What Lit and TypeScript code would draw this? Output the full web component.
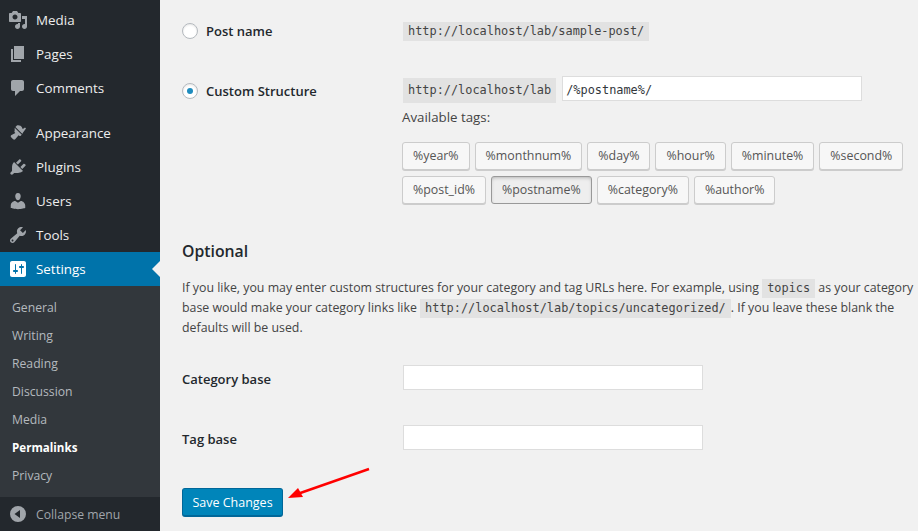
import { LitElement, html, css, svg } from "lit";
import { customElement } from "lit/decorators.js";

const ICONS: Record<string, string> = {
  media: "M13 11V4c0-.55-.45-1-1-1h-1.67L9 1H5L3.67 3H2c-.55 0-1 .45-1 1v7c0 .55.45 1 1 1h10c.55 0 1-.45 1-1zM7 4.5c1.38 0 2.5 1.12 2.5 2.5S8.38 9.5 7 9.5 4.5 8.38 4.5 7 5.62 4.5 7 4.5zM14 6h5v10.5c0 1.38-1.12 2.5-2.5 2.5S14 17.88 14 16.5s1.12-2.5 2.5-2.5c.17 0 .34.02.5.05V9h-3V6zm-4 8.05V13h2v3.5c0 1.38-1.12 2.5-2.5 2.5S7 17.88 7 16.5 8.12 14 9.5 14c.17 0 .34.02.5.05z",
  pages: "M6 15V2h10v13H6zm-1 1h8v2H3V5h2v11z",
  comments: "M5 2h9c1.1 0 2 .9 2 2v7c0 1.1-.9 2-2 2h-2l-5 5v-5H5c-1.1 0-2-.9-2-2V4c0-1.1.9-2 2-2z",
  appearance: "M14.48 11.06L7.41 3.99l1.5-1.5c.5-.56 2.3-.47 3.59.32 1.18.73 1.63 1.97 1.8 2.68.14.56.97.43 2.7-.99l1 1-4.02 5.56zM6.7 4.7l7.07 7.07-1.06 1.06c-.39.39-1.03.39-1.42 0l-.68-.68-3.42 4.21c-.56.56-1.47.56-2.03 0l-2.03-2.03c-.56-.56-.56-1.47 0-2.03L7.34 9.88l-.68-.68c-.39-.39-.39-1.03 0-1.42z",
  plugins: "M13.11 4.36L9.87 7.6 8 5.73l3.24-3.24c.35-.34 1.05-.2 1.56.32.52.51.66 1.21.31 1.55zm-8 1.77l.91-1.12 9.01 9.01-1.19.84c-.71.71-2.63 1.16-3.82 1.16H6.14L4.9 17.26c-.59.59-1.54.59-2.12 0-.59-.58-.59-1.53 0-2.12l1.24-1.24v-3.88c0-1.13.4-3.19 1.09-3.89zm7.26 3.97l3.24-3.24c.34-.35 1.04-.21 1.55.31.52.51.66 1.21.31 1.55l-3.24 3.25z",
  users: "M10 9.25c-2.27 0-2.73-3.44-2.73-3.44C7 4.02 7.82 2 9.97 2c2.16 0 2.98 2.02 2.71 3.81 0 0-.41 3.44-2.68 3.44zm0 2.57L12.72 10c2.39 0 4.52 2.33 4.52 4.53v2.49s-3.65 1.13-7.24 1.13c-3.65 0-7.24-1.13-7.24-1.13v-2.49c0-2.25 1.94-4.48 4.47-4.48z",
  tools: "M16.68 9.77c-1.34 1.34-3.3 1.67-4.95.99l-5.41 6.52c-.99.99-2.59.99-3.58 0s-.99-2.59 0-3.57l6.52-5.42c-.68-1.65-.35-3.61.99-4.95 1.28-1.28 3.12-1.62 4.72-1.06l-2.89 2.89 2.82 2.82 2.86-2.87c.53 1.58.18 3.39-1.08 4.65zM3.81 16.21c.4.39 1.04.39 1.43 0 .4-.4.4-1.04 0-1.43-.39-.4-1.03-.4-1.43 0-.39.39-.39 1.03 0 1.43z",
  settings: "M18 16V4c0-1.1-.9-2-2-2H4c-1.1 0-2 .9-2 2v12c0 1.1.9 2 2 2h12c1.1 0 2-.9 2-2zM8 11h1c.55 0 1 .45 1 1s-.45 1-1 1H8v1.5c0 .28-.22.5-.5.5s-.5-.22-.5-.5V13H6c-.55 0-1-.45-1-1s.45-1 1-1h1V5.5c0-.28.22-.5.5-.5s.5.22.5.5V11zm5-2h-1c-.55 0-1-.45-1-1s.45-1 1-1h1V5.5c0-.28.22-.5.5-.5s.5.22.5.5V7h1c.55 0 1 .45 1 1s-.45 1-1 1h-1v5.5c0 .28-.22.5-.5.5s-.5-.22-.5-.5V9z",
  collapse: "M10 2a8 8 0 1 0 0 16 8 8 0 0 0 0-16zm2 4v8L6.5 10z",
};

const icon = (name: string) => html`<svg class="ic" viewBox="0 0 20 20" width="20" height="20">${svg`<path fill-rule="evenodd" d=${ICONS[name]}></path>`}</svg>`;

const GROUP1 = [["media", "Media"], ["pages", "Pages"], ["comments", "Comments"]];
const GROUP2 = [["appearance", "Appearance"], ["plugins", "Plugins"], ["users", "Users"], ["tools", "Tools"]];
const SUB = ["General", "Writing", "Reading", "Discussion", "Media", "Permalinks", "Privacy"];
const TAGS = [
  ["%year%", "%monthnum%", "%day%", "%hour%", "%minute%", "%second%"],
  ["%post_id%", "%postname%", "%category%", "%author%"],
];

@customElement("app-root")
export class AppRoot extends LitElement {
  static styles = css`
    :host {
      display: flex;
      position: relative;
      width: 918px;
      height: 531px;
      overflow: hidden;
      background: #f1f1f1;
      color: #23282d;
      font-family: "Open Sans", sans-serif;
      font-size: 12.35px;
    }
    .side {
      width: 160px;
      flex: none;
      background: #23282d;
      display: flex;
      flex-direction: column;
      padding-top: 3px;
      box-sizing: border-box;
    }
    .item {
      height: 34px;
      display: flex;
      align-items: center;
      gap: 8px;
      padding-left: 8px;
      color: #eee;
      font-size: 13.4px;
    }
    .ic { fill: #a0a5aa; flex: none; }
    .sep { height: 11px; }
    .item.cur { background: #0073aa; color: #fff; position: relative; }
    .item.cur .ic { fill: #fff; }
    .item.cur::after {
      content: "";
      position: absolute;
      right: 0;
      top: 9px;
      border: 8px solid transparent;
      border-right-color: #f1f1f1;
      border-left-width: 0;
    }
    .sub {
      background: #32373c;
      padding: 8px 0 6px;
      flex: 1;
    }
    .sub div {
      height: 28px;
      line-height: 28px;
      padding-left: 12px;
      color: #b4b9be;
      font-size: 12.2px;
    }
    .sub div.on { color: #fff; font-weight: 700; font-size: 11.6px; }
    .collapse { color: #a0a5aa; font-size: 12.2px; height: 34px; flex: none; }
    .main {
      flex: 1;
      min-width: 0;
      padding: 21px 0 0 22px;
      line-height: 20px;
      color: #444;
    }
    .row { display: grid; grid-template-columns: 221px 1fr; }
    .lbl { display: flex; align-items: center; gap: 8px; font-weight: 600; color: #23282d; font-size: 13px; height: 20px; }
    .radio {
      width: 16px;
      height: 16px;
      box-sizing: border-box;
      border: 1px solid #b4b9be;
      border-radius: 50%;
      background: #fff;
      box-shadow: inset 0 1px 2px rgba(0,0,0,.1);
      display: flex;
      align-items: center;
      justify-content: center;
    }
    .radio.on::before { content: ""; width: 6px; height: 6px; border-radius: 50%; background: #1e8cbe; }
    code {
      font-family: "DejaVu Sans Mono", monospace;
      font-size: 11.9px;
      background: #e2e2e2;
      padding: 2px 5px 3px;
      color: #444;
    }
    .custom { margin-top: 40px; }
    .cs { display: flex; align-items: center; gap: 6px; margin-top: -5px; height: 25px; }
    .cs code { margin-top: 4px; }
    .inp {
      box-sizing: border-box;
      background: #fff;
      border: 1px solid #ddd;
      height: 25px;
    }
    .cs .inp {
      width: 300px;
      font-family: "DejaVu Sans Mono", monospace;
      font-size: 11.9px;
      color: #32373c;
      padding-left: 3px;
      line-height: 27px;
    }
    .avail { margin: 6px 0 0 -1px; font-size: 13.3px; }
    .tags { display: flex; gap: 5px; margin: 15px 0 0 -1px; }
    .tags + .tags { margin-top: 6px; }
    .tag {
      box-sizing: border-box;
      height: 28px;
      line-height: 26px;
      padding: 0 10px;
      border: 1px solid #ccc;
      border-radius: 3px;
      background: #f7f7f7;
      box-shadow: 0 1px 0 #ccc;
      color: #555;
      font-size: 12.4px;
    }
    .tag.on { background: #eee; border-color: #999; box-shadow: inset 0 2px 5px -3px rgba(0,0,0,.5); }
    h2 { margin: 37px 0 0; font-size: 15.8px; font-weight: 600; line-height: 20px; color: #23282d; }
    .desc { margin: 17px 0 0; white-space: nowrap; }
    .base { align-items: center; height: 25px; }
    .base .lbl { height: 25px; padding-top: 2px; box-sizing: border-box; }
    .base .inp { width: 300px; }
    .b1 { margin-top: 27px; }
    .b2 { margin-top: 35px; }
    .save {
      display: inline-block;
      margin-top: 38px;
      width: 101px;
      height: 29px;
      box-sizing: border-box;
      line-height: 27px;
      text-align: center;
      background: #0085ba;
      border: 1px solid #006799;
      border-bottom-width: 2px;
      border-radius: 3px;
      color: #fff;
      font-size: 12.5px;
    }
    .arrow { position: absolute; left: 280px; top: 460px; }
  `;

  render() {
    return html`
      <nav class="side">
        ${GROUP1.map(([i, t]) => html`<div class="item">${icon(i)}<span>${t}</span></div>`)}
        <div class="sep"></div>
        ${GROUP2.map(([i, t]) => html`<div class="item">${icon(i)}<span>${t}</span></div>`)}
        <div class="item cur">${icon("settings")}<span>Settings</span></div>
        <div class="sub">
          ${SUB.map((s) => html`<div class=${s === "Permalinks" ? "on" : ""}>${s}</div>`)}
        </div>
        <div class="item collapse">${icon("collapse")}<span>Collapse menu</span></div>
      </nav>
      <main class="main">
        <div class="row">
          <div class="lbl"><span class="radio"></span>Post name</div>
          <div><code>http://localhost/lab/sample-post/</code></div>
        </div>
        <div class="row custom">
          <div class="lbl"><span class="radio on"></span>Custom Structure</div>
          <div>
            <div class="cs"><code>http://localhost/lab</code><div class="inp">/%postname%/</div></div>
            <div class="avail">Available tags:</div>
            ${TAGS.map((r) => html`<div class="tags">${r.map((t) => html`<span class="tag ${t === "%postname%" ? "on" : ""}">${t}</span>`)}</div>`)}
          </div>
        </div>
        <h2>Optional</h2>
        <p class="desc">If you like, you may enter custom structures for your category and tag URLs here. For example, using <code>topics</code> as your category<br />base would make your category links like <code>http://localhost/lab/topics/uncategorized/</code>. If you leave these blank the<br />defaults will be used.</p>
        <div class="row base b1"><div class="lbl">Category base</div><div class="inp"></div></div>
        <div class="row base b2"><div class="lbl">Tag base</div><div class="inp"></div></div>
        <div class="save">Save Changes</div>
      </main>
      <svg class="arrow" width="100" height="45" viewBox="0 0 100 45">
        <path d="M89 9 L16 34.5" stroke="#f00" stroke-width="2.4" fill="none"></path>
        <path d="M8 38 L18 28 L23 37 Z" fill="#f00"></path>
      </svg>
    `;
  }
}
